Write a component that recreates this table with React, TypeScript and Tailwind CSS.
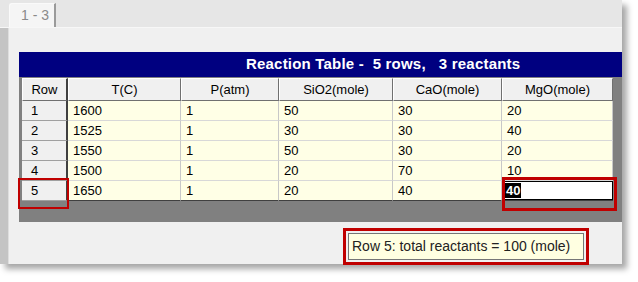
import React from 'react';

const cols = ['T(C)', 'P(atm)', 'SiO2(mole)', 'CaO(mole)', 'MgO(mole)'];
const rows = [
  ['1600', '1', '50', '30', '20'],
  ['1525', '1', '30', '30', '40'],
  ['1550', '1', '50', '30', '20'],
  ['1500', '1', '20', '70', '10'],
  ['1650', '1', '20', '40', '40'],
];

export default function App() {
  return (
    <div className="w-[638px] h-[282px] bg-white font-['Liberation_Sans',Arial,sans-serif] text-[13px] text-black">
      <div className="relative w-[622px] h-[264px] flex flex-col bg-[#f0f0f0] shadow-[5px_5px_6px_rgba(0,0,0,0.35)]">
        {/* tab strip */}
        <div className="h-[28px] bg-[#e6e6e6] flex items-end pl-[9px] border-b border-[#f7f7f7]">
          <div className="w-[47px] h-[24px] bg-[#f5f5f5] rounded-tl-[3px] border-t border-l border-[#fafafa] border-r-2 border-r-[#9a9a9a] flex items-center pl-[11px] text-[#8a8a8a] text-[14px]">
            1 - 3
          </div>
        </div>

        <div className="flex flex-1">
          {/* left edge */}
          <div className="w-[9px] bg-[#c4c4c4] border-r border-[#dedede]" />

          <div className="flex-1 pl-[10px] pt-[24px]">
            {/* title bar */}
            <div className="h-[25px] bg-[#000080] text-white font-bold text-[15px] tracking-[0.2px] flex items-center pl-[227px] whitespace-pre">
              Reaction Table -  5 rows,   3 reactants
            </div>

            {/* grid */}
            <div className="h-[145px] bg-[#808080] pt-[1px] pl-[3px]">
              <div className="grid grid-cols-[46px_113px_98px_114px_109px_111px]">
                <div className="h-[23px] bg-[#f0f0f0] border-t border-l border-white border-r-2 border-r-[#404040] border-b border-b-[#707070] flex items-center justify-center">
                  Row
                </div>
                {cols.map((c) => (
                  <div
                    key={c}
                    className="h-[23px] bg-[#f0f0f0] border-t border-l border-white border-r border-r-[#707070] border-b border-b-[#707070] flex items-center justify-center"
                  >
                    {c}
                  </div>
                ))}

                {rows.map((r, i) => (
                  <React.Fragment key={i}>
                    <div className="h-[20px] bg-[#f0f0f0] border-b border-[#a0a0a0] border-r-2 border-r-[#404040] flex items-center pl-[9px]">
                      {i + 1}
                    </div>
                    {r.map((v, j) =>
                      i === 4 && j === 4 ? (
                        <div key={j} className="h-[20px] bg-[#ffffe6] border-b border-[#404040] flex">
                          <div className="flex-1 bg-white border border-black flex items-center pl-[2px]">
                            <span className="bg-black text-white font-bold leading-[15px] px-[1px]">40</span>
                          </div>
                        </div>
                      ) : (
                        <div
                          key={j}
                          className={`h-[20px] bg-[#ffffe6] border-r border-r-[#c8c8c8] flex items-center pl-[5px] border-b ${
                            i === 4 ? 'border-b-[#404040]' : 'border-b-[#d8d8d8]'
                          }`}
                        >
                          {v}
                        </div>
                      )
                    )}
                  </React.Fragment>
                ))}
              </div>
            </div>
          </div>
        </div>

        {/* annotation boxes */}
        <div className="absolute left-[18px] top-[178px] w-[51px] h-[31px] border-2 border-[#c00000]" />
        <div className="absolute left-[502px] top-[177px] w-[115px] h-[34px] border-[3px] border-[#c00000]" />
        <div className="absolute left-[343px] top-[228px] w-[246px] h-[37px] border-[3px] border-[#c00000] p-[2px]">
          <div className="h-full bg-[#ffffe1] border border-[#767676] flex items-center pl-[3px] text-[14px] text-[#222]">
            Row 5: total reactants = 100 (mole)
          </div>
        </div>
      </div>
    </div>
  );
}
